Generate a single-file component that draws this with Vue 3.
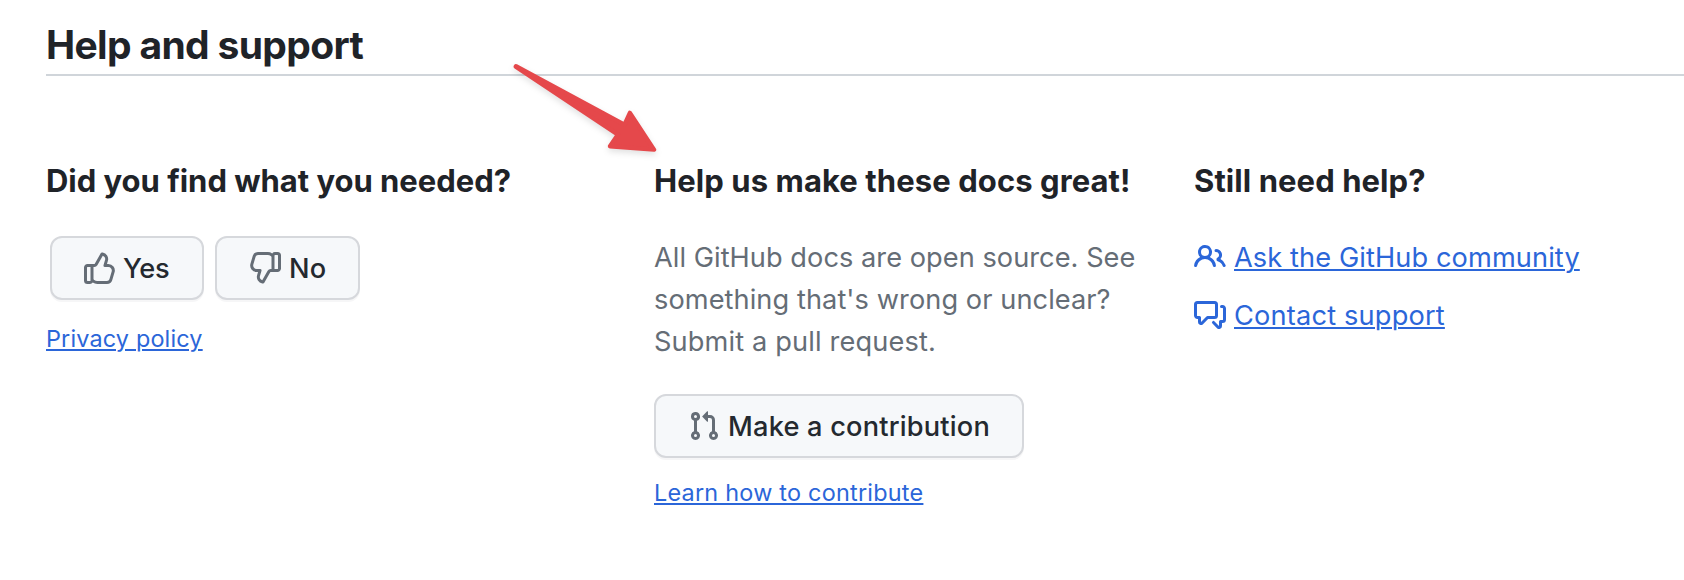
<script setup>
const icons = {
  thumb: 'M8.347.631A.75.75 0 0 1 9.123.26l.238.04a3.25 3.25 0 0 1 2.591 4.098L11.494 6h.665a3.25 3.25 0 0 1 3.118 4.167l-1.135 3.859A2.751 2.751 0 0 1 11.503 16H6.586a3.75 3.75 0 0 1-2.184-.702A1.75 1.75 0 0 1 3 16H1.75A1.75 1.75 0 0 1 0 14.25v-6.5C0 6.784.784 6 1.75 6h3.417a.25.25 0 0 0 .217-.127ZM4.75 13.649l.396.33c.404.337.914.521 1.44.521h4.917a1.25 1.25 0 0 0 1.2-.897l1.135-3.859A1.75 1.75 0 0 0 12.159 7.5H10.5a.75.75 0 0 1-.721-.956l.731-2.558a1.75 1.75 0 0 0-1.127-2.14L6.69 6.611a1.75 1.75 0 0 1-1.523.889H4.75ZM3.25 7.5h-1.5a.25.25 0 0 0-.25.25v6.5c0 .138.112.25.25.25H3a.25.25 0 0 0 .25-.25Z',
  pull: 'M7.177 3.073L9.573.677A.25.25 0 0110 .854v4.792a.25.25 0 01-.427.177L7.177 3.427a.25.25 0 010-.354zM3.75 2.5a.75.75 0 100 1.5.75.75 0 000-1.5zm-2.25.75a2.25 2.25 0 113 2.122v5.256a2.251 2.251 0 11-1.5 0V5.372A2.25 2.25 0 011.5 3.25zM11 2.5h-1V4h1a1 1 0 011 1v5.628a2.251 2.251 0 101.5 0V5A2.5 2.5 0 0011 2.5zm1 10.25a.75.75 0 111.5 0 .75.75 0 01-1.5 0zM3.75 12a.75.75 0 100 1.5.75.75 0 000-1.5z',
  people: 'M5.5 3.5a2 2 0 100 4 2 2 0 000-4zM2 5.5a3.5 3.5 0 115.898 2.549 5.507 5.507 0 013.034 4.084.75.75 0 11-1.482.235 4.001 4.001 0 00-7.9 0 .75.75 0 01-1.482-.236A5.507 5.507 0 013.102 8.05 3.49 3.49 0 012 5.5zM11 4a.75.75 0 100 1.5 1.5 1.5 0 01.666 2.844.75.75 0 00-.416.672v.352a.75.75 0 00.574.73c1.2.289 2.162 1.2 2.522 2.372a.75.75 0 101.434-.44 5.01 5.01 0 00-2.56-3.012A3 3 0 0011 4z',
  discussion: 'M1.5 2.75a.25.25 0 01.25-.25h8.5a.25.25 0 01.25.25v5.5a.25.25 0 01-.25.25h-3.5a.75.75 0 00-.53.22L3.5 11.44V9.25a.75.75 0 00-.75-.75h-1a.25.25 0 01-.25-.25v-5.5zM1.75 1A1.75 1.75 0 000 2.75v5.5C0 9.216.784 10 1.75 10H2v1.543a1.457 1.457 0 002.487 1.03L7.061 10h3.189A1.75 1.75 0 0012 8.25v-5.5A1.75 1.75 0 0010.25 1h-8.5zM14.5 4.75a.25.25 0 00-.25-.25h-.5a.75.75 0 110-1.5h.5c.966 0 1.75.784 1.75 1.75v5.5A1.75 1.75 0 0114.25 12H14v1.543a1.457 1.457 0 01-2.487 1.03L9.22 12.28a.75.75 0 111.06-1.06l2.22 2.22v-2.19a.75.75 0 01.75-.75h1a.25.25 0 00.25-.25v-5.5z'
}
</script>

<template>
  <section class="support">
    <h2 class="title">Help and support</h2>
    <div class="columns">
      <div class="column">
        <h3 class="heading found">Did you find what you needed?</h3>
        <div class="votes">
          <button class="btn yes" type="button">
            <svg class="icon" viewBox="0 0 16 16"><path :d="icons.thumb" /></svg>
            <span>Yes</span>
          </button>
          <button class="btn no" type="button">
            <svg class="icon flipped" viewBox="0 0 16 16"><path :d="icons.thumb" /></svg>
            <span>No</span>
          </button>
        </div>
        <a class="small privacy" href="#">Privacy policy</a>
      </div>

      <div class="column">
        <h3 class="heading">Help us make these docs great!</h3>
        <p class="text">All GitHub docs are open source. See<br /><span class="middle">something that's wrong or unclear?</span><br /><span class="last">Submit a pull request.</span></p>
        <button class="btn contribute" type="button">
          <svg class="icon" viewBox="0 0 16 16"><path :d="icons.pull" /></svg>
          <span>Make a contribution</span>
        </button>
        <a class="small learn" href="#">Learn how to contribute</a>
      </div>

      <div class="column">
        <h3 class="heading">Still need help?</h3>
        <div class="links">
          <div class="link">
            <svg class="icon" viewBox="0 0 16 16"><path :d="icons.people" /></svg>
            <a class="community" href="#">Ask the GitHub community</a>
          </div>
          <div class="link">
            <svg class="icon" viewBox="0 0 16 16"><path :d="icons.discussion" /></svg>
            <a class="contact" href="#">Contact support</a>
          </div>
        </div>
      </div>
    </div>

    <svg class="arrow" viewBox="500 50 180 120">
      <path d="M516 66.2 L624.4 124.8 L629.9 112.9 L654 149.6 L610 146.2 L618 134.6 L515.8 66.6 Z" />
    </svg>
  </section>
</template>

<style>
body {
  background: #fff;
}
</style>

<style scoped>
.support {
  position: relative;
  box-sizing: border-box;
  height: 580px;
  padding: 15px 0 0 46px;
  overflow: hidden;
  font-family: Inter, "Liberation Sans", sans-serif;
  color: #1f2328;
  white-space: nowrap;
}
.title {
  margin: 0;
  border-bottom: 2px solid #d0d5da;
  font-size: 39px;
  line-height: 59px;
  font-weight: 700;
  letter-spacing: -0.66px;
}
.columns {
  display: grid;
  grid-template-columns: 608px 540px 1fr;
  padding-top: 81px;
}
.column {
  display: flex;
  flex-direction: column;
  align-items: flex-start;
}
.heading {
  margin: 0 0 31px;
  font-size: 31px;
  line-height: 48px;
  font-weight: 700;
  letter-spacing: 0.08px;
}
.found {
  letter-spacing: -0.03px;
}
.votes {
  display: flex;
  gap: 11px;
  padding-left: 4px;
}
.btn {
  display: flex;
  align-items: center;
  gap: 8px;
  box-sizing: border-box;
  height: 64px;
  margin: 0;
  padding: 0 0 0 32px;
  border: 2px solid #d6d8dc;
  border-radius: 12px;
  background: #f6f8fa;
  box-shadow: 0 2px 0 rgba(31, 35, 40, 0.04);
  color: #24292f;
  font-family: inherit;
  font-size: 27.2px;
  line-height: 42px;
  font-weight: 500;
}
.btn span,
.link a {
  margin-top: 2px;
}
.yes {
  width: 154px;
  letter-spacing: -0.3px;
}
.yes span {
  margin-left: -1px;
}
.no {
  width: 145px;
  letter-spacing: 0.1px;
}
.contribute {
  width: 370px;
  letter-spacing: 0.2px;
}
.icon {
  display: block;
  flex: none;
  width: 32px;
  height: 32px;
  fill: #656d76;
}
.flipped {
  transform: rotate(180deg);
}
.text {
  margin: 1px 0 31px;
  color: #656d76;
  font-size: 27.2px;
  line-height: 42px;
  letter-spacing: 0.04px;
}
.middle {
  letter-spacing: 0.07px;
}
.last {
  letter-spacing: 0.14px;
}
a {
  color: #2b66d9;
  text-decoration: underline;
  text-decoration-thickness: 2px;
  text-underline-offset: 2px;
}
.small {
  font-size: 23.4px;
  line-height: 36px;
}
.privacy {
  margin-top: 21px;
  letter-spacing: 0.17px;
}
.learn {
  margin-top: 17px;
  letter-spacing: 0.24px;
}
.links {
  display: flex;
  flex-direction: column;
  gap: 16px;
}
.link {
  display: flex;
  align-items: center;
  gap: 8px;
  height: 42px;
  font-size: 27.2px;
  line-height: 42px;
}
.link .icon {
  fill: #2b66d9;
}
.community {
  letter-spacing: 0.1px;
}
.contact {
  letter-spacing: 0.18px;
}
.arrow {
  position: absolute;
  left: 500px;
  top: 50px;
  width: 180px;
  height: 120px;
  fill: #e5484b;
  stroke: #e5484b;
  stroke-width: 4.4px;
  stroke-linejoin: round;
  filter: drop-shadow(0 3px 3px rgba(0, 0, 0, 0.12));
}
</style>
